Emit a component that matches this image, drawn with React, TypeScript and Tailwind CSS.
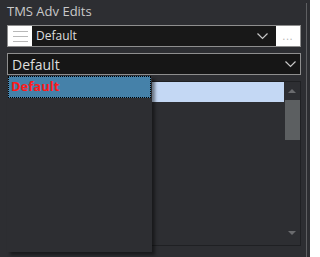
const Chevron = ({ className }: { className?: string }) => (
  <svg width="11" height="7" viewBox="0 0 11 7" className={className}>
    <path d="M0.5 0.5 L5.5 5.5 L10.5 0.5" fill="none" stroke="#c8c8c8" strokeWidth="1.2" />
  </svg>
);

export default function App() {
  return (
    <div
      className="relative flex h-[257px] w-[310px] overflow-hidden bg-[#2d2e32]"
      style={{ fontFamily: '"Segoe UI", "Open Sans", "Liberation Sans", sans-serif' }}
    >
      {/* main column */}
      <div className="flex w-[306px] flex-col pl-[7px] pr-[5px]">
        <div className="h-[25px] pt-[3px] text-[13px] leading-[17px] text-[#c9c9c9]">TMS Adv Edits</div>

        {/* preset combo */}
        <div className="flex h-[22px] border border-[#8e8e8e] bg-[#181818]">
          <div className="flex w-[24px] flex-col items-center justify-center gap-[4px] bg-white">
            <div className="h-px w-[15px] bg-[#b8b8b8]" />
            <div className="h-px w-[15px] bg-[#b8b8b8]" />
            <div className="h-px w-[15px] bg-[#b8b8b8]" />
          </div>
          <div className="flex flex-1 items-center pl-[4px] pr-[8px]">
            <span className="flex-1 text-[12px] text-[#dedede]">Default</span>
            <Chevron />
          </div>
          <div className="flex w-[24px] items-center justify-center bg-white text-[10px] tracking-[1px] text-[#b0b0b0]">
            ...
          </div>
        </div>

        {/* second combo */}
        <div className="mt-[6px] flex h-[22px] items-center border border-[#8e8e8e] bg-[#161616] pl-[4px] pr-[4px]">
          <span className="flex-1 text-[14px] text-[#dedede]">Default</span>
          <Chevron />
        </div>

        {/* list box */}
        <div className="mt-[6px] flex h-[165px] border border-[#1f2023] bg-[#2d2e32]">
          <div className="flex-1">
            <div className="h-[20px] bg-[#c4d8f4]" />
          </div>
          <div className="flex w-[16px] flex-col items-center">
            <div className="flex h-[18px] items-center justify-center">
              <div className="h-0 w-0 border-x-[4px] border-b-[4px] border-x-transparent border-b-[#6a6b6e]" />
            </div>
            <div className="h-[40px] w-[15px] bg-[#5c5f61]" />
            <div className="flex-1" />
            <div className="flex h-[14px] items-start justify-center">
              <div className="h-0 w-0 border-x-[4px] border-t-[4px] border-x-transparent border-t-[#6a6b6e]" />
            </div>
          </div>
        </div>
      </div>
      <div className="mt-[3px] w-px bg-[#5e5f62]" />

      {/* dropdown popup */}
      <div className="absolute left-[7px] top-[76px] h-[176px] w-[145px] bg-[#2d2e32] px-px shadow-[3px_3px_3px_rgba(0,0,0,0.45)]">
        <div className="flex h-[22px] items-center border border-dotted border-black bg-[#4581a9] pl-[2px]">
          <span className="text-[13px] font-bold text-[#ff1a1a]">Default</span>
        </div>
      </div>
    </div>
  );
}
